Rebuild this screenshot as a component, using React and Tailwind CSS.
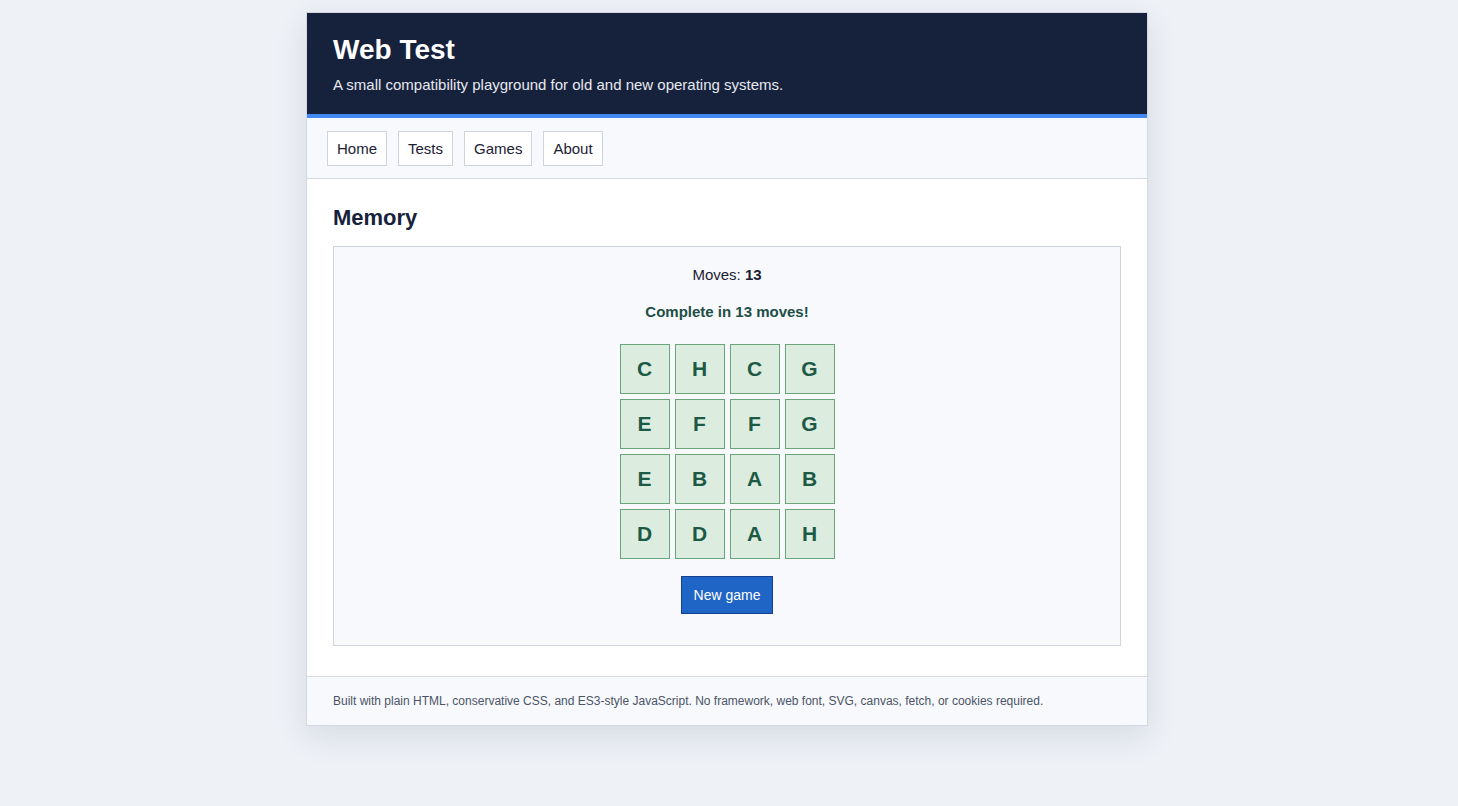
import React, { useState } from 'react';

const START = ['C', 'H', 'C', 'G', 'E', 'F', 'F', 'G', 'E', 'B', 'A', 'B', 'D', 'D', 'A', 'H'];
const NAV = ['Home', 'Tests', 'Games', 'About'];

function Card({ letter }) {
  return (
    <div className="flex h-[50px] w-[50px] items-center justify-center border border-[#6aa57a] bg-[#dcecde] text-[21px] font-bold text-[#1d5a45]">
      {letter}
    </div>
  );
}

export default function App() {
  const [moves] = useState(13);

  return (
    <div className="min-h-[806px] bg-[#eef1f6] pt-[12px] pr-[4px] pb-[40px] font-['Liberation_Sans',Arial,sans-serif]">
      <div className="mx-auto w-[842px] border border-[#d3d8e2] bg-white shadow-[0_10px_30px_rgba(40,55,90,0.12)]">
        <header className="bg-[#16213c] px-[26px] pt-[20px] pb-[19px]">
          <h1 className="text-[28px] font-bold leading-[34px] text-white">Web Test</h1>
          <p className="mt-[8px] text-[15px] leading-[20px] text-[#e6e9f0]">
            A small compatibility playground for old and new operating systems.
          </p>
        </header>
        <div className="h-[4px] bg-[#4488f2]" />

        <nav className="flex gap-[11px] border-b border-[#d6dae3] bg-[#f7f9fc] px-[20px] pt-[13px] pb-[12px]">
          {NAV.map((item) => (
            <a
              key={item}
              href="#"
              className="flex h-[35px] items-center border border-[#cdd3df] bg-white px-[9px] pt-[1px] text-[15px] text-[#1b2233]"
            >
              {item}
            </a>
          ))}
        </nav>

        <main className="px-[26px] pt-[25px] pb-[30px]">
          <h2 className="text-[22px] font-bold leading-[28px] text-[#17223b]">Memory</h2>

          <div className="mt-[14px] flex flex-col items-center border border-[#cfd4dc] bg-[#f8f9fc] pt-[18px] pb-[31px]">
            <p className="text-[15px] leading-[20px] text-[#1b2233]">
              Moves: <strong>{moves}</strong>
            </p>
            <p className="mt-[17px] text-[15px] font-bold leading-[20px] text-[#1d4f45]">
              Complete in {moves} moves!
            </p>

            <div className="mt-[22px] grid grid-cols-4 gap-[5px]">
              {START.map((letter, i) => (
                <Card key={i} letter={letter} />
              ))}
            </div>

            <button
              type="button"
              className="mt-[17px] h-[38px] w-[92px] border border-[#163f90] bg-[#1f65c6] text-[14px] text-white"
            >
              New game
            </button>
          </div>
        </main>

        <footer className="border-t border-[#d6dae3] bg-[#f7f9fc] px-[26px] py-[16px] text-[12px] leading-[16px] text-[#4b5466]">
          Built with plain HTML, conservative CSS, and ES3-style JavaScript. No framework, web font, SVG, canvas, fetch, or cookies required.
        </footer>
      </div>
    </div>
  );
}
